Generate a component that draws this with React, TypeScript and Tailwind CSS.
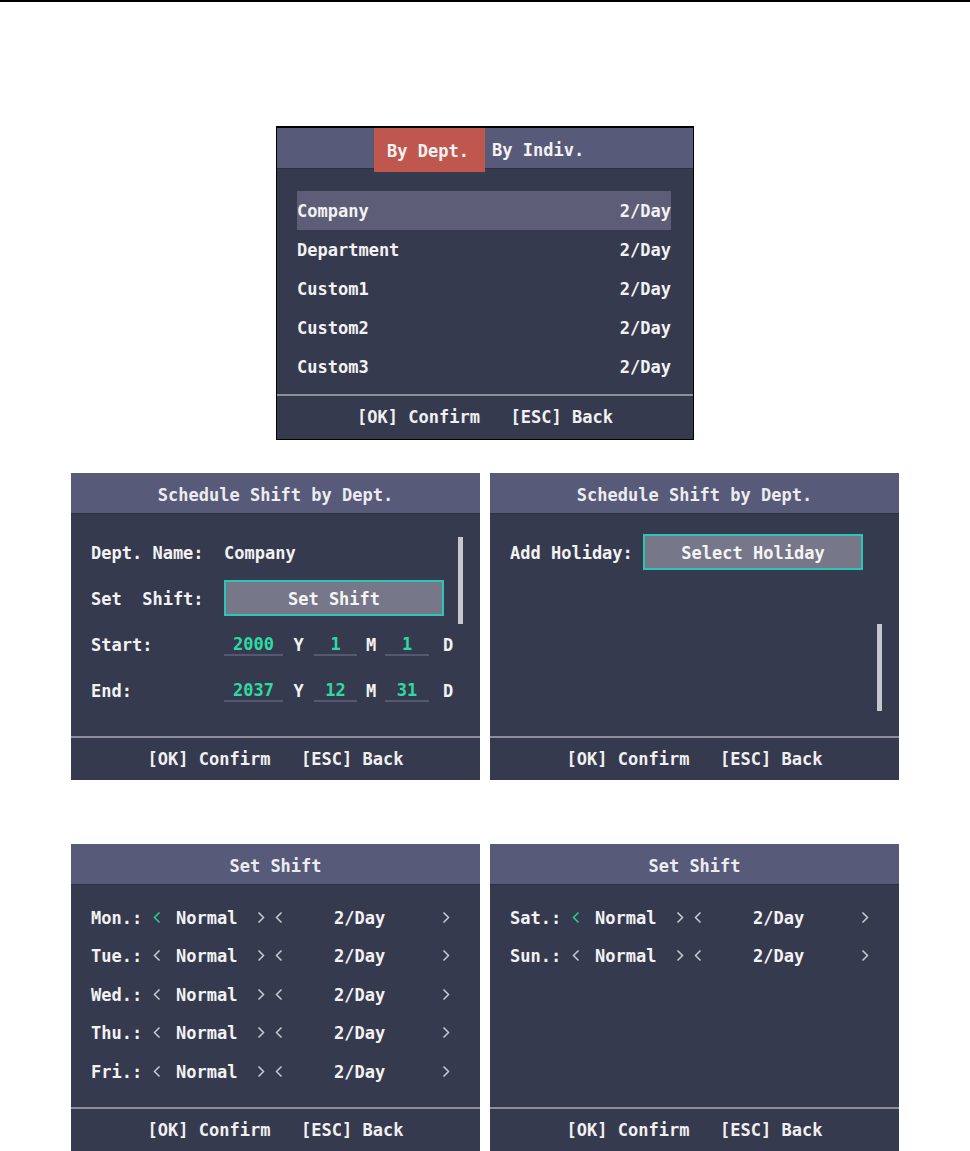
import React from "react";

const font = "font-['DejaVu_Sans_Mono',monospace] font-bold text-[17px] leading-none";

const Header = ({ title }: { title: string }) => (
  <div className="flex h-[41px] items-center justify-center border-b border-[#2d3043] bg-[#575a78] pt-[4px] text-[#ececf0]">
    {title}
  </div>
);

const Footer = () => (
  <>
    <div className="h-[2px] bg-[#8e8e9a]" />
    <div className="flex flex-1 items-center justify-center whitespace-pre text-[#f0f0f0]">
      {"[OK] Confirm   [ESC] Back"}
    </div>
  </>
);

const Chevron = ({ dir, green }: { dir: "l" | "r"; green?: boolean }) => (
  <svg width="8" height="13" viewBox="0 0 8 13" className="shrink-0">
    <path
      d={dir === "l" ? "M6.5 1.5 L1.5 6.5 L6.5 11.5" : "M1.5 1.5 L6.5 6.5 L1.5 11.5"}
      fill="none"
      stroke={green ? "#27d38f" : "#c9c9d2"}
      strokeWidth="1.5"
    />
  </svg>
);

const Scrollbar = ({ bottom }: { bottom?: boolean }) => (
  <div className={`mr-[17px] mt-[23px] flex h-[174px] w-[5px] flex-col ${bottom ? "justify-end" : ""}`}>
    <div className="h-[87px] w-[5px] bg-[#c6c6ce]" />
  </div>
);

const Button = ({ label }: { label: string }) => (
  <div className="flex h-[36px] w-[220px] items-center justify-center border-2 border-[#2cc6b5] bg-[#77778a] pt-[2px] text-[#f4f4f4]">
    {label}
  </div>
);

const DateField = ({ value, w }: { value: string; w: string }) => (
  <div className={`flex h-[24px] items-center justify-center border-b-2 border-[#55586e] pt-[2px] ${w} text-[#2edaa2]`}>
    {value}
  </div>
);

const DateRow = ({ label, y, m, d }: { label: string; y: string; m: string; d: string }) => (
  <div className="flex h-[46px] items-center">
    <div className="w-[133px] pt-[2px]">{label}</div>
    <DateField value={y} w="w-[59px]" />
    <div className="flex w-[31px] justify-center pt-[2px]">Y</div>
    <DateField value={m} w="w-[43px]" />
    <div className="flex w-[28px] justify-center pt-[2px]">M</div>
    <DateField value={d} w="w-[44px]" />
    <div className="ml-[14px] pt-[2px]">D</div>
  </div>
);

const ShiftRow = ({ day, active }: { day: string; active?: boolean }) => (
  <div className="flex h-[38.5px] items-center">
    <div className="w-[62px] pt-[2px]">{day}</div>
    <div className="w-[23px]">
      <Chevron dir="l" green={active} />
    </div>
    <div className="w-[81px] pt-[2px]">Normal</div>
    <div className="w-[18px]">
      <Chevron dir="r" />
    </div>
    <div className="w-[59px]">
      <Chevron dir="l" />
    </div>
    <div className="w-[108px] pt-[2px]">2/Day</div>
    <Chevron dir="r" />
  </div>
);

const depts = ["Company", "Department", "Custom1", "Custom2", "Custom3"];

export default function App() {
  return (
    <div className={`min-h-[1151px] bg-white text-[#f2f2f2] ${font}`}>
      <div className="h-[2px] bg-black" />
      <div className="flex flex-col items-center pt-[124px]">
        {/* schedule list */}
        <div className="flex h-[314px] w-[418px] flex-col border border-t-2 border-black bg-[#363a4f]">
          <div className="flex h-[41px] border-b border-[#2d3043] bg-[#575a78]">
            <div className="ml-[97px] flex h-[44px] w-[111px] shrink-0 items-center bg-[#c0574f] pl-[13px] pt-[2px]">
              By Dept.
            </div>
            <div className="flex items-center pl-[7px] pt-[4px]">By Indiv.</div>
          </div>
          <div className="ml-[20px] mt-[22px] flex w-[374px] flex-col">
            {depts.map((d, i) => (
              <div
                key={d}
                className={`flex h-[39px] items-center justify-between pt-[2px] ${i === 0 ? "bg-[#5d5d77]" : ""}`}
              >
                <span>{d}</span>
                <span>2/Day</span>
              </div>
            ))}
          </div>
          <div className="mt-[8px]" />
          <Footer />
        </div>

        {/* dept settings */}
        <div className="mt-[33px] flex gap-[10px]">
          <div className="flex h-[307px] w-[409px] flex-col bg-[#363a4f]">
            <Header title="Schedule Shift by Dept." />
            <div className="flex h-[222px]">
              <div className="flex-1 pl-[20px] pt-[15px]">
                <div className="flex h-[46px] items-center pt-[2px]">
                  <div className="w-[133px]">Dept. Name:</div>
                  <div>Company</div>
                </div>
                <div className="flex h-[46px] items-center">
                  <div className="w-[133px] whitespace-pre pt-[2px]">{"Set  Shift:"}</div>
                  <Button label="Set Shift" />
                </div>
                <DateRow label="Start:" y="2000" m="1" d="1" />
                <DateRow label="End:" y="2037" m="12" d="31" />
              </div>
              <Scrollbar />
            </div>
            <Footer />
          </div>
          <div className="flex h-[307px] w-[409px] flex-col bg-[#363a4f]">
            <Header title="Schedule Shift by Dept." />
            <div className="flex h-[222px]">
              <div className="flex-1 pl-[20px] pt-[15px]">
                <div className="flex h-[46px] items-center">
                  <div className="w-[133px] pt-[2px]">Add Holiday:</div>
                  <Button label="Select Holiday" />
                </div>
              </div>
              <Scrollbar bottom />
            </div>
            <Footer />
          </div>
        </div>

        {/* weekly shifts */}
        <div className="mt-[64px] flex gap-[10px]">
          <div className="flex h-[307px] w-[409px] flex-col bg-[#363a4f]">
            <Header title="Set Shift" />
            <div className="flex h-[222px] flex-col pl-[20px] pt-[13px]">
              <ShiftRow day="Mon.:" active />
              <ShiftRow day="Tue.:" />
              <ShiftRow day="Wed.:" />
              <ShiftRow day="Thu.:" />
              <ShiftRow day="Fri.:" />
            </div>
            <Footer />
          </div>
          <div className="flex h-[307px] w-[409px] flex-col bg-[#363a4f]">
            <Header title="Set Shift" />
            <div className="flex h-[222px] flex-col pl-[20px] pt-[13px]">
              <ShiftRow day="Sat.:" active />
              <ShiftRow day="Sun.:" />
            </div>
            <Footer />
          </div>
        </div>
      </div>
    </div>
  );
}
